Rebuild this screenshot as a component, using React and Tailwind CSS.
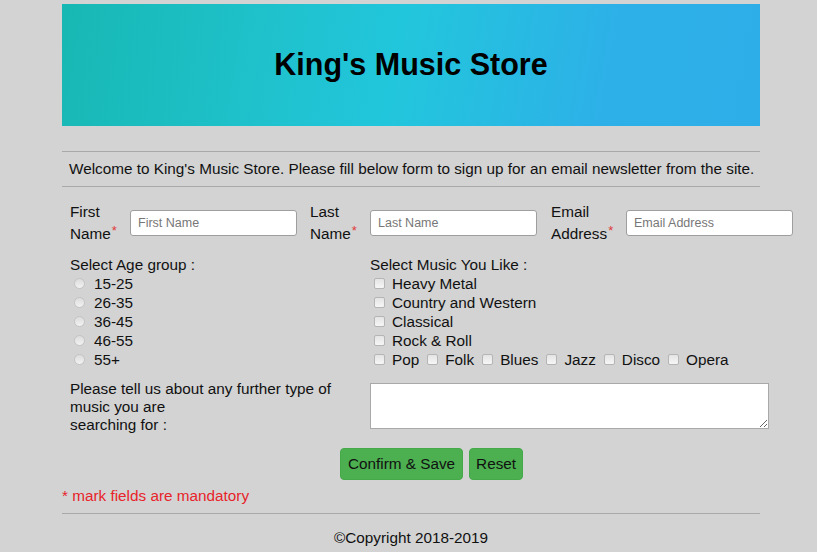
import React from "react";

function Radio({ label }) {
  return (
    <div className="flex items-center h-[19px]">
      <span className="ml-[4px] w-[11px] h-[11px] rounded-full border border-[#c4c4c4] bg-[linear-gradient(180deg,#dcdcdc,#f2f2f2)]"></span>
      <span className="ml-[9px]">{label}</span>
    </div>
  );
}

function Check({ label, className = "" }) {
  return (
    <span className={"inline-flex items-center h-[19px] " + className}>
      <span className="ml-[4px] w-[11px] h-[11px] rounded-[2px] border border-[#b5b5b5] bg-[linear-gradient(180deg,#e4e4e4,#f6f6f6)]"></span>
      <span className="ml-[7px]">{label}</span>
    </span>
  );
}

function Req() {
  return <span className="text-[#e03a3a] text-[13px] align-top relative top-[-3px] ml-[1px]">*</span>;
}

const inputCls =
  "w-[167px] h-[26px] shrink-0 bg-white border border-[#9e9e9e] rounded-[3px] px-[7px] text-[12.5px] placeholder:text-[#777] outline-none";

export default function App() {
  return (
    <div className="min-h-[552px] bg-[#d3d3d3] font-['Liberation_Sans',Arial,sans-serif] text-[15.3px] text-[#111]">
      <div className="ml-[62px] w-[698px] pt-[4px]">
        <div className="h-[122px] flex items-center justify-center bg-[linear-gradient(100deg,#17b8b3_0%,#1ec0c8_25%,#22c6dc_48%,#2db0e8_78%,#2eaee8_100%)]">
          <h1 className="text-[30.5px] font-bold text-black leading-none mt-[-1px]">King's Music Store</h1>
        </div>

        <div className="mt-[25px] border-t border-b border-[#a9a9a9] h-[36px] flex items-center px-[7px] whitespace-nowrap">
          Welcome to King's Music Store. Please fill below form to sign up for an email newsletter from the site.
        </div>

        <div className="mt-[14px] pl-[8px] flex items-center whitespace-nowrap">
          <div className="w-[60px] shrink-0 leading-[22px]">First<br />Name<Req /></div>
          <input placeholder="First Name" className={inputCls} />
          <div className="ml-[13px] w-[60px] shrink-0 leading-[22px]">Last<br />Name<Req /></div>
          <input placeholder="Last Name" className={inputCls} />
          <div className="ml-[14px] w-[75px] shrink-0 leading-[22px]">Email<br />Address<Req /></div>
          <input placeholder="Email Address" className={inputCls} />
        </div>

        <div className="mt-[11px] pl-[8px] flex leading-[19px]">
          <div className="w-[300px] shrink-0">
            <div className="h-[18px] leading-[18px]">Select Age group :</div>
            <Radio label="15-25" />
            <Radio label="26-35" />
            <Radio label="36-45" />
            <Radio label="46-55" />
            <Radio label="55+" />
          </div>
          <div>
            <div className="h-[18px] leading-[18px]">Select Music You Like :</div>
            <div><Check label="Heavy Metal" /></div>
            <div><Check label="Country and Western" /></div>
            <div><Check label="Classical" /></div>
            <div><Check label="Rock &amp; Roll" /></div>
            <div className="flex whitespace-nowrap">
              <Check label="Pop" />
              <Check label="Folk" className="ml-[4px]" />
              <Check label="Blues" className="ml-[4px]" />
              <Check label="Jazz" className="ml-[4px]" />
              <Check label="Disco" className="ml-[4px]" />
              <Check label="Opera" className="ml-[4px]" />
            </div>
          </div>
        </div>

        <div className="mt-[11px] pl-[8px] flex items-start">
          <div className="w-[300px] shrink-0 leading-[18px] pr-[20px]">
            Please tell us about any further type of music you are<br />searching for :
          </div>
          <textarea className="mt-[3px] w-[399px] h-[46px] shrink-0 bg-white border border-[#a9a9a9] outline-none"></textarea>
        </div>

        <div className="mt-[14px] flex justify-center gap-[6px] pl-[41px]">
          <button className="h-[32px] px-[7px] bg-[#4caf50] rounded-[4px] text-[15.3px] text-[#111] border border-[#45a849]">Confirm &amp; Save</button>
          <button className="h-[32px] px-[6px] bg-[#4caf50] rounded-[4px] text-[15.3px] text-[#111] border border-[#45a849]">Reset</button>
        </div>

        <div className="mt-[7px] text-[#e8232a] leading-[18px]">* mark fields are mandatory</div>

        <div className="mt-[8px] border-t border-[#a9a9a9]"></div>

        <div className="mt-[15px] text-center leading-[18px]">©Copyright 2018-2019</div>
      </div>
    </div>
  );
}
